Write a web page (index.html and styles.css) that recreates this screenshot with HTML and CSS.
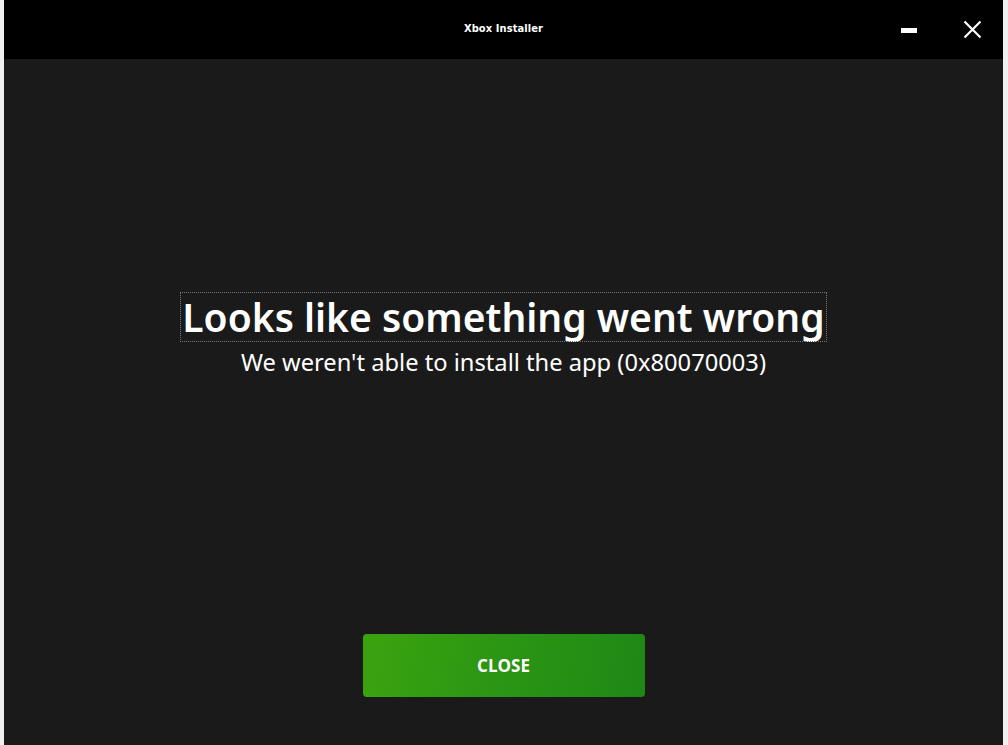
FILE: index.html
```html
<!DOCTYPE html>
<html lang="en">
<head>
    <meta charset="UTF-8">
    <title>Xbox Installer</title>
    <link rel="stylesheet" href="styles.css">
</head>
<body>
    <div class="window">
        <header class="titlebar">
            <span class="title">Xbox Installer</span>
            <div class="controls">
                <button class="ctl minimize" aria-label="Minimize">
                    <svg width="16" height="5" viewBox="0 0 16 5"><rect x="0" y="0" width="16" height="5" fill="#fff"/></svg>
                </button>
                <button class="ctl close-x" aria-label="Close">
                    <svg width="19" height="19" viewBox="0 0 19 19"><path d="M1.5 1.5 L17.5 17.5 M17.5 1.5 L1.5 17.5" stroke="#fff" stroke-width="2.2" fill="none"/></svg>
                </button>
            </div>
        </header>
        <main class="content">
            <div class="message">
                <h1 class="headline">Looks like something went wrong</h1>
                <p class="detail">We weren't able to install the app (0x80070003)</p>
            </div>
            <button class="primary">CLOSE</button>
        </main>
    </div>
</body>
</html>
```

FILE: styles.css
```css
body {
    margin: 0;
    background-color: #f0f0f0;
    font-family: 'Noto Sans', 'Open Sans', sans-serif;
    overflow: hidden;
}
.window {
    margin-left: 4px;
    width: 999px;
    height: 745px;
    background-color: #1a1a1a;
    display: flex;
    flex-direction: column;
}
.titlebar {
    height: 59px;
    background: #000;
    position: relative;
    display: flex;
    align-items: center;
    justify-content: center;
}
.title {
    color: #fff;
    font-family: 'DejaVu Sans Condensed', 'DejaVu Sans', sans-serif;
    font-weight: bold;
    font-size: 11px;
    letter-spacing: 0.1px;
    margin-top: -2px;
}
.controls {
    position: absolute;
    right: 0;
    top: 0;
    height: 59px;
    display: flex;
    align-items: center;
}
.ctl {
    background: none;
    border: none;
    padding: 0;
    display: flex;
    align-items: center;
    justify-content: center;
    cursor: pointer;
}
.minimize { width: 16px; margin-right: 46px; padding-top: 2px; }
.close-x { width: 19px; margin-right: 21px; }
.content {
    flex: 1;
    display: flex;
    flex-direction: column;
    align-items: center;
    padding-top: 234px;
    padding-bottom: 48px;
}
.message { text-align: center; }
.headline {
    margin: 0;
    color: #fff;
    font-size: 39px;
    font-weight: 600;
    line-height: 48px;
    padding: 0 1px;
    outline: 1px dotted #777;
}
.detail {
    margin: 5px 0 0;
    color: #fff;
    font-size: 23.7px;
    line-height: 32px;
}
.primary {
    margin-top: auto;
    width: 282px;
    height: 63px;
    border: none;
    border-radius: 4px;
    background: linear-gradient(100deg, #3aa40f 0%, #2b9514 50%, #1f8816 100%);
    color: #fff;
    font-family: 'Open Sans', 'Noto Sans', sans-serif;
    font-weight: bold;
    font-size: 17px;
    cursor: pointer;
}
```
